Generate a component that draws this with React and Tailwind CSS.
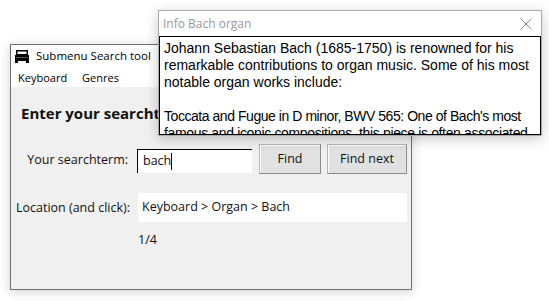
import React from "react";

const ui = { fontFamily: '"Open Sans", "Noto Sans", sans-serif' };
const arial = { fontFamily: '"Liberation Sans", Arial, sans-serif' };

function AppIcon() {
  return (
    <svg width="14" height="14" viewBox="0 0 14 14">
      <rect x="1" y="1" width="12" height="5" fill="#000" />
      <rect x="2.5" y="2.5" width="9" height="2.5" fill="#fff" />
      <rect x="0" y="6" width="14" height="6" fill="#000" />
      <rect x="1" y="8" width="12" height="1" fill="#555" />
      <rect x="0" y="12" width="3" height="2" fill="#000" />
      <rect x="11" y="12" width="3" height="2" fill="#000" />
    </svg>
  );
}

function Btn({ children, w }) {
  return (
    <div
      className={`${w} h-[30px] flex items-center justify-center bg-[#e1e1e1] border border-[#b5b5b5] border-r-[#8a8a8a] border-b-[#8a8a8a] text-[12.5px] text-[#111]`}
      style={{ boxShadow: "inset 1px 1px 0 #fdfdfd" }}
    >
      {children}
    </div>
  );
}

export default function App() {
  return (
    <div className="relative w-[549px] h-[301px] bg-white overflow-hidden">
      {/* Main window */}
      <div
        className="absolute left-[10px] top-[44px] w-[402px] h-[246px] border border-[#707070] bg-[#f0f0f0] flex flex-col"
        style={{ ...ui, boxShadow: "0 2px 10px rgba(0,0,0,0.18)" }}
      >
        <div className="h-[21px] bg-white flex items-center pl-[4px] gap-[7px] text-[11.5px] text-black">
          <AppIcon />
          <span>Submenu Search tool</span>
        </div>
        <div className="h-[21px] bg-white flex items-center pt-[4px] pl-[7px] gap-[15px] text-[11px] text-black">
          <span>Keyboard</span>
          <span>Genres</span>
        </div>
        <div className="flex flex-col pt-[16px]">
          <div className="pl-[10px] text-[15px] font-bold text-[#111] whitespace-nowrap leading-[20px]">
            Enter your searchterm
          </div>
          <div className="flex items-center mt-[21px]">
            <div className="w-[119px] text-right text-[12.5px] text-[#111] pr-[2px] whitespace-nowrap pt-[2px]">Your searchterm:</div>
            <div className="ml-[7px] w-[115px] h-[24px] bg-white border-t border-l border-black flex items-center pl-[5px] text-[12.5px] text-[#111] mt-[3px]">
              bach<span className="inline-block w-px h-[17px] bg-black" />
            </div>
            <div className="ml-[7px]">
              <Btn w="w-[62px]">Find</Btn>
            </div>
            <div className="ml-[6px]">
              <Btn w="w-[80px]">Find next</Btn>
            </div>
          </div>
          <div className="flex items-center mt-[19px]">
            <div className="w-[119px] text-right text-[12.5px] text-[#111] whitespace-nowrap pt-[2px]">Location (and click):</div>
            <div className="ml-[8px] w-[269px] h-[29px] bg-white flex items-center pl-[4px] text-[12.5px] text-[#111]">
              Keyboard &gt; Organ &gt; Bach
            </div>
          </div>
          <div className="pl-[127px] mt-[9px] text-[12.5px] text-[#111]">1/4</div>
        </div>
      </div>

      {/* Info window */}
      <div
        className="absolute left-[158px] top-[10px] w-[384px] h-[126px] border border-[#aaaaaa] bg-white flex flex-col"
        style={{ boxShadow: "0 3px 12px rgba(0,0,0,0.22)" }}
      >
        <div className="h-[25px] flex items-center justify-between pl-[4px] pr-[9px]" style={ui}>
          <span className="text-[12px] text-[#999999]">Info Bach organ</span>
          <svg width="12" height="12" viewBox="0 0 12 12">
            <path d="M0.5 0.5L11.5 11.5M11.5 0.5L0.5 11.5" stroke="#8a8a8a" strokeWidth="1" />
          </svg>
        </div>
        <div className="flex-1 border border-black overflow-hidden pl-[4px] pt-[3px]">
          <div className="text-[14px] leading-[17px] text-black whitespace-nowrap" style={arial}>
            <div>Johann Sebastian Bach (1685-1750) is renowned for his</div>
            <div>remarkable contributions to organ music. Some of his most</div>
            <div>notable organ works include:</div>
            <div className="h-[17px]" />
            <div className="tracking-[-0.45px]">Toccata and Fugue in D minor, BWV 565: One of Bach's most</div>
            <div className="tracking-[-0.35px]">famous and iconic compositions, this piece is often associated</div>
          </div>
        </div>
      </div>
    </div>
  );
}
